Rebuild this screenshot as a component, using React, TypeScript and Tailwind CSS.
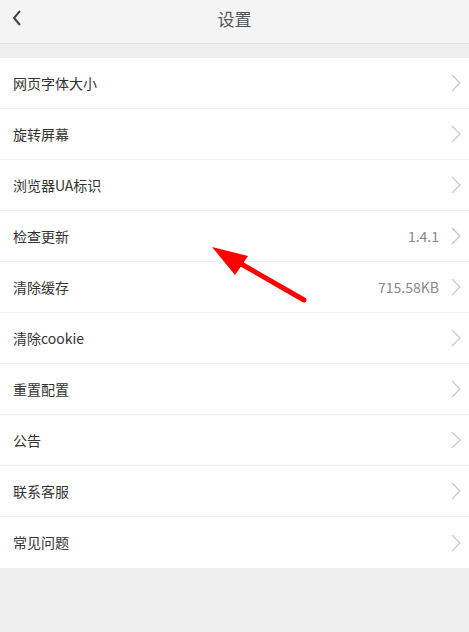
import React from 'react';

// Settings screen with a red annotation arrow

const items: { label: string; value?: string }[] = [
  { label: '网页字体大小' },
  { label: '旋转屏幕' },
  { label: '浏览器UA标识' },
  { label: '检查更新', value: '1.4.1' },
  { label: '清除缓存', value: '715.58KB' },
  { label: '清除cookie' },
  { label: '重置配置' },
  { label: '公告' },
  { label: '联系客服' },
  { label: '常见问题' },
];

function Chevron() {
  return (
    <svg width="10" height="18" viewBox="0 0 10 18" className="shrink-0">
      <path d="M1 1 L9 9 L1 17" fill="none" stroke="#c8c8c8" strokeWidth="1.2" />
    </svg>
  );
}

export default function App() {
  return (
    <div
      className="relative w-[469px] h-[632px] bg-[#efefef] overflow-hidden"
      style={{ fontFamily: '"Noto Sans CJK SC", "Noto Sans", sans-serif' }}
    >
      {/* Header */}
      <div className="relative h-[44px] bg-[#f4f4f4] border-b border-[#e0e0e0] flex items-center justify-center">
        <svg width="10" height="16" viewBox="0 0 10 16" className="absolute left-[12px] top-[10px]">
          <path d="M8 1 L2 8 L8 15" fill="none" stroke="#444" strokeWidth="2" />
        </svg>
        <span className="text-[17px] text-[#555] -mt-[6px]">设置</span>
      </div>

      {/* List */}
      <div className="mt-[14px] bg-white">
        {items.map((item, i) => (
          <div
            key={item.label}
            className={`h-[51px] flex items-center pl-[13px] pr-[8px] ${i < items.length - 1 ? 'border-b border-[#f0f0f0]' : ''}`}
          >
            <span className="flex-1 text-[14px] text-[#333]">{item.label}</span>
            {item.value && <span className="text-[14px] text-[#888] mr-[12px]">{item.value}</span>}
            <Chevron />
          </div>
        ))}
      </div>

      {/* Annotation arrow */}
      <svg className="absolute left-0 top-0 pointer-events-none" width="469" height="632">
        <line x1="304" y1="300" x2="236" y2="261" stroke="#ff0000" strokeWidth="5" strokeLinecap="round" />
        <polygon points="212,247 248,256 235,275" fill="#ff0000" />
      </svg>
    </div>
  );
}
